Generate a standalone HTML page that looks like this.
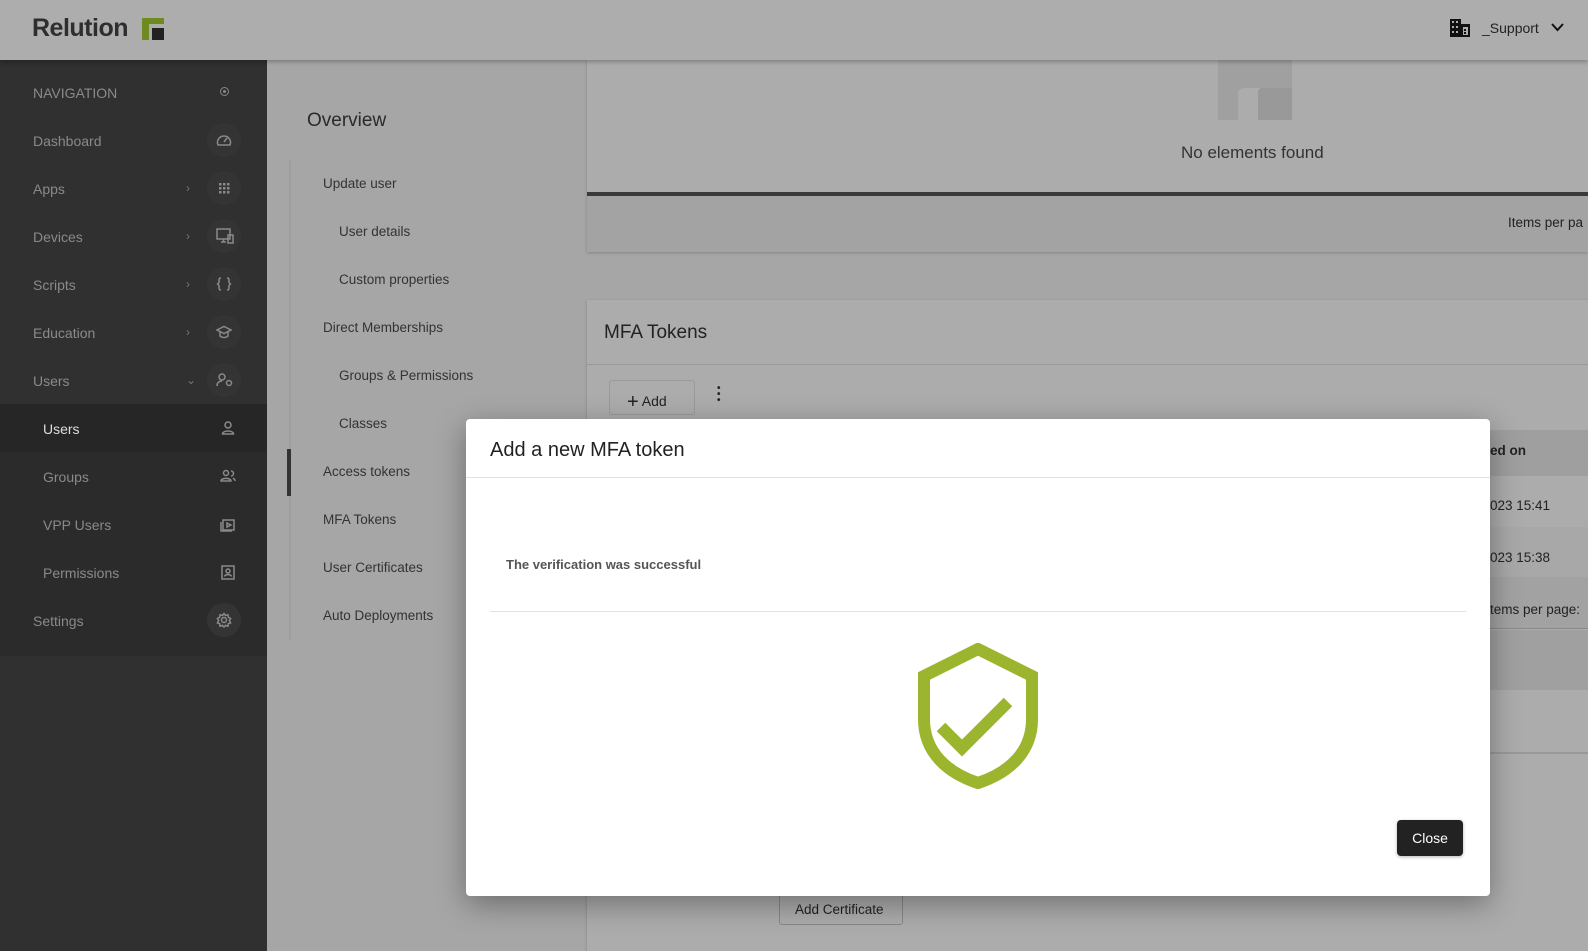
<!DOCTYPE html>
<html><head><meta charset="utf-8"><style>
*{box-sizing:border-box;margin:0;padding:0}
body{width:1588px;height:951px;overflow:hidden;background:#a6a6a6;font-family:"Liberation Sans",sans-serif;position:relative;color:#222}
.abs{position:absolute}
#hdr{left:0;top:0;width:1588px;height:60px;background:#adadad;box-shadow:0 2px 4px rgba(0,0,0,.25);z-index:2}
#side{left:0;top:60px;width:267px;height:891px;background:#303030}
.si{position:absolute;left:33px;font-size:14px;color:#8a8a8a}
.sub{left:43px}
.ic{position:absolute;left:207px;width:34px;height:34px;border-radius:50%;background:#343434}
.chev{position:absolute;left:186px;font-size:12px;color:#777}
.mid{position:absolute;font-size:13.5px;color:#333}
.card{position:absolute;background:#acacac;box-shadow:0 1px 3px rgba(0,0,0,.2)}
.sv{position:absolute;left:216px}
.sv *{stroke:#8a8a8a;fill:none;stroke-width:1.5}
#modal{left:466px;top:419px;width:1024px;height:477px;background:#fff;border-radius:4px;box-shadow:0 8px 30px rgba(0,0,0,.35);z-index:5}
</style></head><body>
<div id="hdr" class="abs">
 <div class="abs" style="left:32px;top:14px;font-size:25px;font-weight:bold;color:#2e2e2e;letter-spacing:-0.5px">Relution</div>
 <svg class="abs" style="left:142px;top:18px" width="22" height="22" viewBox="0 0 22 22"><path d="M0 0H22V6H7V22H0Z" fill="#6f8a1f"/><rect x="10" y="10" width="12" height="12" fill="#222"/></svg>
 <svg class="abs" style="left:1450px;top:19px" width="20" height="18" viewBox="0 0 20 18"><path d="M0 0H11V5H20V18H0Z" fill="#111"/><g fill="#adadad"><rect x="2" y="2" width="2" height="2"/><rect x="6" y="2" width="2" height="2"/><rect x="2" y="7" width="2" height="2"/><rect x="6" y="7" width="2" height="2"/><rect x="2" y="12" width="2" height="2"/><rect x="6" y="12" width="2" height="2"/><rect x="13" y="8" width="5" height="8"/></g><rect x="14" y="10" width="2" height="2" fill="#111"/><rect x="14" y="13" width="2" height="2" fill="#111"/></svg>
 <div class="abs" style="left:1482px;top:20px;font-size:14px;color:#222">_Support</div>
 <svg class="abs" style="left:1551px;top:23px" width="13" height="9" viewBox="0 0 13 9"><path d="M1 1L6.5 7L12 1" stroke="#111" stroke-width="2" fill="none"/></svg>
</div>
<div id="side" class="abs">
 <div class="si" style="top:25px">NAVIGATION</div>
 <div class="abs" style="left:220px;top:27px;width:9px;height:9px;border:1.5px solid #888;border-radius:50%"><div style="margin:1.5px;width:3px;height:3px;background:#888;border-radius:50%"></div></div>
 <div class="si" style="top:73px">Dashboard</div><div class="ic" style="top:63px"></div>
 <div class="si" style="top:121px">Apps</div><div class="chev" style="top:121px">›</div><div class="ic" style="top:111px"></div>
 <div class="si" style="top:169px">Devices</div><div class="chev" style="top:169px">›</div><div class="ic" style="top:159px"></div>
 <div class="si" style="top:217px">Scripts</div><div class="chev" style="top:217px">›</div><div class="ic" style="top:207px"></div>
 <div class="si" style="top:265px">Education</div><div class="chev" style="top:265px">›</div><div class="ic" style="top:255px"></div>
 <div class="si" style="top:313px">Users</div><div class="chev" style="top:313px">⌄</div><div class="ic" style="top:303px"></div>
 <div class="abs" style="left:0;top:344px;width:267px;height:252px;background:#2b2b2b"></div>
 <div class="abs" style="left:0;top:344px;width:267px;height:48px;background:#262626"></div>
 <div class="si sub" style="top:361px;color:#ddd">Users</div>
 <div class="si sub" style="top:409px">Groups</div>
 <div class="si sub" style="top:457px">VPP Users</div>
 <div class="si sub" style="top:505px">Permissions</div>
 <div class="si" style="top:553px">Settings</div><div class="ic" style="top:543px"></div>
 <svg class="sv" style="top:72px" width="16" height="16" viewBox="0 0 16 16"><path d="M2 13A6.5 6.5 0 1 1 14 13Z"/><path d="M8 10L11 6"/></svg>
 <svg class="sv" style="top:120px" width="16" height="16" viewBox="0 0 16 16"><g style="fill:#8a8a8a;stroke:none"><rect x="3" y="3" width="2.5" height="2.5" style="fill:#8a8a8a;stroke:none"/><rect x="7" y="3" width="2.5" height="2.5" style="fill:#8a8a8a;stroke:none"/><rect x="11" y="3" width="2.5" height="2.5" style="fill:#8a8a8a;stroke:none"/><rect x="3" y="7" width="2.5" height="2.5" style="fill:#8a8a8a;stroke:none"/><rect x="7" y="7" width="2.5" height="2.5" style="fill:#8a8a8a;stroke:none"/><rect x="11" y="7" width="2.5" height="2.5" style="fill:#8a8a8a;stroke:none"/><rect x="3" y="11" width="2.5" height="2.5" style="fill:#8a8a8a;stroke:none"/><rect x="7" y="11" width="2.5" height="2.5" style="fill:#8a8a8a;stroke:none"/><rect x="11" y="11" width="2.5" height="2.5" style="fill:#8a8a8a;stroke:none"/></g></svg>
 <svg class="sv" style="top:168px" width="18" height="16" viewBox="0 0 18 16"><rect x="1" y="1" width="13" height="10"/><path d="M5 14H10M7.5 11V14"/><rect x="12" y="7" width="5" height="8"/></svg>
 <svg class="sv" style="top:216px" width="16" height="16" viewBox="0 0 16 16"><path d="M5 2C3 2 3 3 3 5V6.5L1.5 8L3 9.5V11C3 13 3 14 5 14M11 2C13 2 13 3 13 5V6.5L14.5 8L13 9.5V11C13 13 13 14 11 14"/></svg>
 <svg class="sv" style="top:264px" width="16" height="16" viewBox="0 0 16 16"><path d="M1 6L8 2.5L15 6L8 9.5Z"/><path d="M4 8V12C6 14 10 14 12 12V8"/></svg>
 <svg class="sv" style="top:312px" width="18" height="16" viewBox="0 0 18 16"><circle cx="6" cy="5" r="3"/><path d="M1 14C1 10 4 9 6 9"/><circle cx="13" cy="11" r="2.5"/></svg>
 <svg class="sv" style="top:360px;left:221px" width="14" height="16" viewBox="0 0 14 16"><circle cx="7" cy="5" r="3"/><path d="M1.5 14C1.5 10 12.5 10 12.5 14Z"/></svg>
 <svg class="sv" style="top:408px;left:220px" width="16" height="16" viewBox="0 0 16 16"><circle cx="6" cy="5" r="2.5"/><path d="M1 13C1 9.5 11 9.5 11 13Z"/><path d="M11 3A2.5 2.5 0 0 1 11 8M13 10C14.5 11 15 12 15 13"/></svg>
 <svg class="sv" style="top:456px;left:220px" width="16" height="16" viewBox="0 0 16 16"><rect x="3" y="4" width="11" height="10"/><path d="M1 6V15H12"/><path d="M7 7L11 9L7 11Z"/></svg>
 <svg class="sv" style="top:504px;left:221px" width="14" height="16" viewBox="0 0 14 16"><rect x="1" y="2" width="12" height="13"/><circle cx="7" cy="7" r="2"/><path d="M3.5 12.5C4 10 10 10 10.5 12.5"/></svg>
 <svg class="sv" style="top:552px" width="16" height="16" viewBox="0 0 16 16"><circle cx="8" cy="8" r="2.5"/><path d="M8 1.5L9.5 3.5L12 2.8L12.4 5.3L14.6 6.5L13.4 8.7L14.6 10.9L12.3 11.7L12 14.2L9.5 13.4L8 15L6.5 13.4L4 14.2L3.7 11.7L1.4 10.9L2.6 8.7L1.4 6.5L3.6 5.3L4 2.8L6.5 3.5Z"/></svg>
</div>
<!-- middle nav -->
<div class="abs" style="left:307px;top:110px;font-size:19px;color:#2a2a2a">Overview</div>
<div class="abs" style="left:289px;top:160px;width:2px;height:480px;background:#9e9e9e"></div>
<div class="abs" style="left:287px;top:449px;width:4px;height:47px;background:#333"></div>
<div class="mid" style="left:323px;top:176px">Update user</div>
<div class="mid" style="left:339px;top:224px">User details</div>
<div class="mid" style="left:339px;top:272px">Custom properties</div>
<div class="mid" style="left:323px;top:320px">Direct Memberships</div>
<div class="mid" style="left:339px;top:368px">Groups &amp; Permissions</div>
<div class="mid" style="left:339px;top:416px">Classes</div>
<div class="mid" style="left:323px;top:464px">Access tokens</div>
<div class="mid" style="left:323px;top:512px">MFA Tokens</div>
<div class="mid" style="left:323px;top:560px">User Certificates</div>
<div class="mid" style="left:323px;top:608px">Auto Deployments</div>
<!-- cards -->
<div class="card" style="left:587px;top:60px;width:1001px;height:192px">
 <div class="abs" style="left:631px;top:0;width:74px;height:60px;background:#a0a0a0"></div>
 <div class="abs" style="left:651px;top:28px;width:54px;height:32px;background:#acacac;border-radius:6px 0 0 0"></div>
 <div class="abs" style="left:671px;top:28px;width:34px;height:32px;background:#999;border-radius:4px 0 0 0"></div>
 <div class="abs" style="left:594px;top:83px;font-size:17px;color:#333">No elements found</div>
 <div class="abs" style="left:0;top:132px;width:1001px;height:4px;background:#3a3a3a"></div>
 <div class="abs" style="left:0;top:136px;width:1001px;height:56px;background:#a3a3a3"></div>
 <div class="abs" style="left:921px;top:155px;font-size:13.5px;color:#222">Items per pa</div>
</div>
<div class="card" style="left:587px;top:300px;width:1001px;height:651px">
 <div class="abs" style="left:17px;top:22px;font-size:19px;color:#222">MFA Tokens</div>
 <div class="abs" style="left:0;top:64px;width:1001px;height:1px;background:#999"></div>
 <div class="abs" style="left:22px;top:80px;width:86px;height:35px;border:1px solid #999;border-radius:3px;font-size:14px;padding:8px 0 0 17px"><span style="font-size:20px;position:relative;top:2px">+</span> Add</div>
 <div class="abs" style="left:130px;top:86px;width:4px;line-height:6px;font-size:10px;font-weight:bold">•<br>•<br>•</div>
 <div class="abs" style="left:880px;top:130px;width:121px;height:46px;background:#9f9f9f"></div>
 <div class="abs" style="left:903px;top:143px;font-size:13.5px;font-weight:bold">ed on</div>
 <div class="abs" style="left:903px;top:198px;font-size:13.5px">023 15:41</div>
 <div class="abs" style="left:880px;top:227px;width:121px;height:50px;background:#a8a8a8"></div>
 <div class="abs" style="left:903px;top:250px;font-size:13.5px">023 15:38</div>
 <div class="abs" style="left:880px;top:277px;width:121px;height:52px;background:#a2a2a2"></div>
 <div class="abs" style="left:903px;top:302px;font-size:13.5px">tems per page:</div>
 <div class="abs" style="left:880px;top:328px;width:121px;height:1px;background:#888"></div>
 <div class="abs" style="left:880px;top:330px;width:121px;height:60px;background:#a0a0a0"></div>
 <div class="abs" style="left:880px;top:452px;width:121px;height:2px;background:#999"></div>
 <div class="abs" style="left:192px;top:593px;width:124px;height:32px;border:1px solid #888;border-radius:3px;font-size:13.5px;padding:8px 0 0 15px">Add Certificate</div>
</div>
<div id="modal" class="abs">
 <div class="abs" style="left:24px;top:20px;font-size:20px;color:#222">Add a new MFA token</div>
 <div class="abs" style="left:0;top:58px;width:1024px;height:1px;background:#e2e2e2"></div>
 <div class="abs" style="left:40px;top:138px;font-size:13px;font-weight:bold;color:#555">The verification was successful</div>
 <div class="abs" style="left:24px;top:192px;width:976px;height:1px;background:#e2e2e2"></div>
 <svg class="abs" style="left:452px;top:224px" width="120" height="146" viewBox="0 0 120 146"><path d="M60 6L114 33V76C114 110 90 130 60 140C30 130 6 110 6 76V33Z" stroke="#9bb52e" stroke-width="12" fill="none" stroke-linejoin="miter"/><path d="M23 84L44 105L90 59" stroke="#9bb52e" stroke-width="12" fill="none"/></svg>
 <div class="abs" style="left:931px;top:401px;width:66px;height:36px;background:#222;border-radius:4px;color:#fff;font-size:14px;text-align:center;line-height:36px;box-shadow:0 1px 3px rgba(0,0,0,.3)">Close</div>
</div>
</body></html>
